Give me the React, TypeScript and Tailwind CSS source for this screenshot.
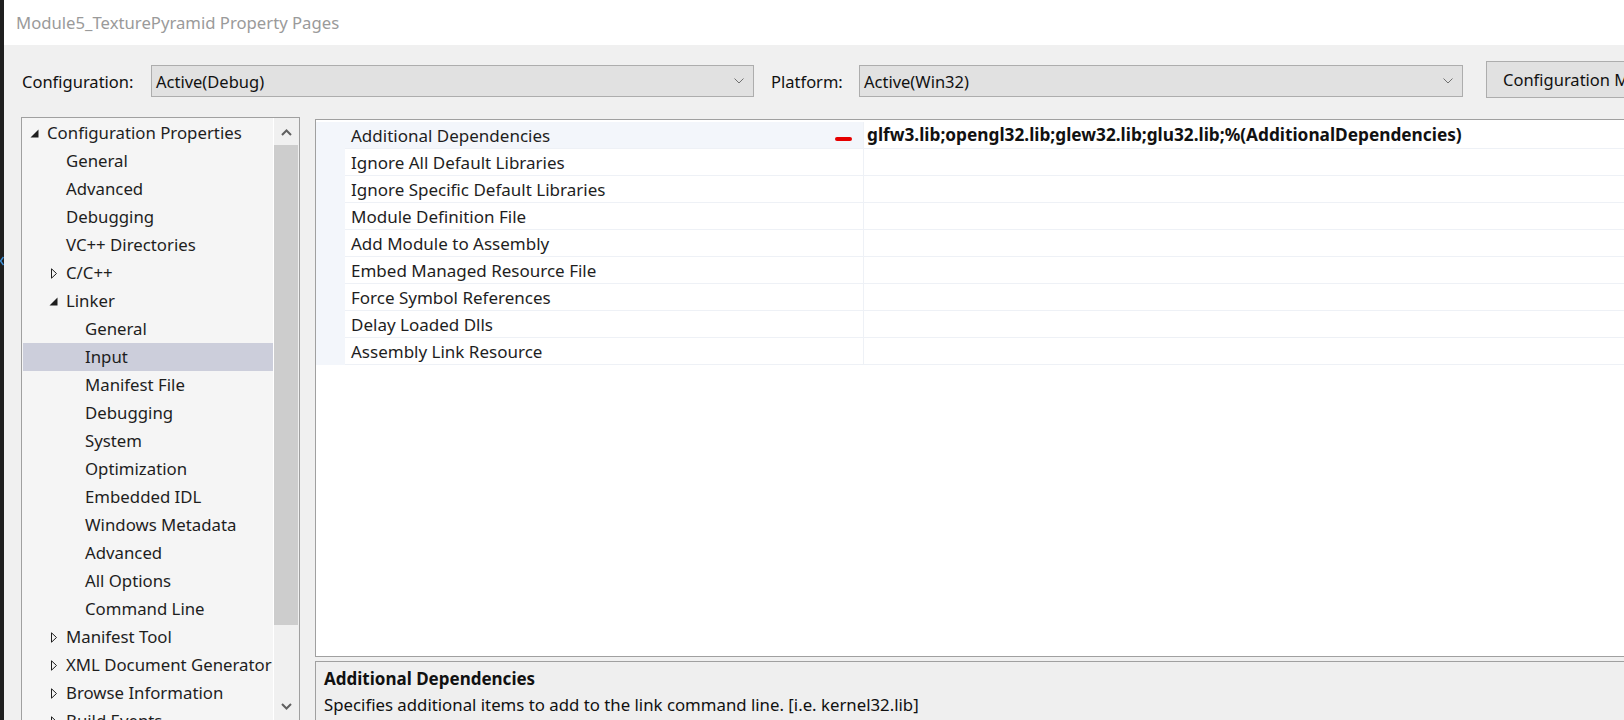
import React from "react";

type TreeItem = { label: string; level: number; icon?: "open" | "closed"; selected?: boolean };

const tree: TreeItem[] = [
  { label: "Configuration Properties", level: 0, icon: "open" },
  { label: "General", level: 1 },
  { label: "Advanced", level: 1 },
  { label: "Debugging", level: 1 },
  { label: "VC++ Directories", level: 1 },
  { label: "C/C++", level: 1, icon: "closed" },
  { label: "Linker", level: 1, icon: "open" },
  { label: "General", level: 2 },
  { label: "Input", level: 2, selected: true },
  { label: "Manifest File", level: 2 },
  { label: "Debugging", level: 2 },
  { label: "System", level: 2 },
  { label: "Optimization", level: 2 },
  { label: "Embedded IDL", level: 2 },
  { label: "Windows Metadata", level: 2 },
  { label: "Advanced", level: 2 },
  { label: "All Options", level: 2 },
  { label: "Command Line", level: 2 },
  { label: "Manifest Tool", level: 1, icon: "closed" },
  { label: "XML Document Generator", level: 1, icon: "closed" },
  { label: "Browse Information", level: 1, icon: "closed" },
  { label: "Build Events", level: 1, icon: "closed" },
];

const props = [
  "Additional Dependencies",
  "Ignore All Default Libraries",
  "Ignore Specific Default Libraries",
  "Module Definition File",
  "Add Module to Assembly",
  "Embed Managed Resource File",
  "Force Symbol References",
  "Delay Loaded Dlls",
  "Assembly Link Resource",
];

function Tri({ kind }: { kind?: "open" | "closed" }) {
  if (kind === "open")
    return (
      <svg width="9" height="9" viewBox="0 0 9 9" className="block">
        <polygon points="8.5,0.5 8.5,8.5 0.5,8.5" fill="#1e1e1e" />
      </svg>
    );
  if (kind === "closed")
    return (
      <svg width="9" height="11" viewBox="0 0 9 11" className="block">
        <polygon points="2.5,0.8 7.5,5.5 2.5,10.2" fill="none" stroke="#1e1e1e" strokeWidth="1" />
      </svg>
    );
  return null;
}

function Chevron() {
  return (
    <svg width="10" height="6" viewBox="0 0 10 6" className="block">
      <path d="M0.5 0.5 L5 5 L9.5 0.5" fill="none" stroke="#707070" strokeWidth="1" />
    </svg>
  );
}

function Dropdown({ value, w }: { value: string; w: string }) {
  return (
    <div className={`flex h-[32px] ${w} shrink-0 items-center justify-between border border-[#adadad] bg-[#e1e1e1] pl-[4px] pr-[9px]`}>
      <span className="pt-[2px] text-[16.5px] leading-none text-[#111]">{value}</span>
      <Chevron />
    </div>
  );
}

export default function App() {
  return (
    <div className="flex h-[720px] w-[1624px] overflow-hidden font-['Noto_Sans',sans-serif] text-[#1e1e1e]">
      <div className="relative w-[4px] shrink-0 bg-[#1f1f1f]">
        <svg width="4" height="10" viewBox="0 0 4 10" className="absolute left-0 top-[256px]">
          <path d="M3.5 1 L0.5 5 L3.5 9" fill="none" stroke="#3d8fd6" strokeWidth="1.5" />
        </svg>
      </div>
      <div className="flex min-w-0 flex-1 flex-col overflow-hidden bg-[#f0f0f0]">
        <div className="flex h-[45px] shrink-0 items-center bg-white pl-[12px] pt-[1px] text-[16.7px] text-[#9a9a9a]">
          Module5_TexturePyramid Property Pages
        </div>

        <div className="flex h-[72px] shrink-0 items-start pl-[18px] pt-[16px]">
          <div className="mt-[4px] flex h-[32px] items-center">
            <span className="w-[129px] shrink-0 pt-[2px] text-[16.5px] leading-none text-[#111]">Configuration:</span>
            <Dropdown value="Active(Debug)" w="w-[603px]" />
            <span className="ml-[17px] w-[88px] shrink-0 pt-[2px] text-[16.5px] leading-none text-[#111]">Platform:</span>
            <Dropdown value="Active(Win32)" w="w-[604px]" />
          </div>
          <div className="ml-[23px] flex h-[37px] w-[200px] shrink-0 items-center border border-[#adadad] bg-[#e1e1e1] pl-[16px] pt-[2px] text-[16.5px] leading-none whitespace-nowrap text-[#111]">
            Configuration Manager...
          </div>
        </div>

        <div className="flex min-h-0 flex-1 items-start pl-[17px]">
          {/* tree */}
          <div className="flex h-[605px] w-[279px] shrink-0 border border-[#a0a0a0] bg-[#f5f5f5]">
            <div className="min-w-0 flex-1 overflow-hidden pt-[1px]">
              {tree.map((t, i) => (
                <div
                  key={i}
                  className={`ml-[1px] flex h-[28px] items-center whitespace-nowrap text-[16.8px] leading-none ${t.selected ? "bg-[#cccedb]" : ""}`}
                  style={{ paddingLeft: 7 + t.level * 19 }}
                >
                  <span className="flex w-[9px] shrink-0 justify-center">
                    <Tri kind={t.icon} />
                  </span>
                  <span className="ml-[8px]">{t.label}</span>
                </div>
              ))}
            </div>
            <div className="flex w-[26px] shrink-0 flex-col border-l border-white bg-[#f0f0f0]">
              <div className="flex h-[27px] shrink-0 items-center justify-center pt-[2px]">
                <svg width="11" height="7" viewBox="0 0 11 7" className="block">
                  <path d="M1 6 L5.5 1.5 L10 6" fill="none" stroke="#606060" strokeWidth="2" />
                </svg>
              </div>
              <div className="mr-[1px] h-[480px] shrink-0 bg-[#cdcdcd]" />
              <div className="flex-1" />
              <div className="flex h-[28px] shrink-0 items-center justify-center pb-[2px]">
                <svg width="11" height="7" viewBox="0 0 11 7" className="block">
                  <path d="M1 1 L5.5 5.5 L10 1" fill="none" stroke="#606060" strokeWidth="2" />
                </svg>
              </div>
            </div>
          </div>

          {/* right side */}
          <div className="ml-[15px] flex w-[1320px] shrink-0 flex-col">
            <div className="mt-[2px] h-[538px] shrink-0 border border-[#a0a0a0] bg-white pt-[2px]">
              {props.map((p, i) => (
                <div key={i} className="flex h-[27px]">
                  <div className="w-[29px] shrink-0 bg-[#f3f6fb]" />
                  <div
                    className={`flex w-[518px] shrink-0 items-center border-b border-[#eef1f6] pl-[6px] text-[17px] leading-none whitespace-nowrap ${i === 0 ? "bg-[#f3f6fb]" : "bg-white"}`}
                  >
                    {p}
                  </div>
                  <div className="relative flex min-w-0 flex-1 items-center border-b border-l border-[#eef1f6] pl-[3px] text-[17.25px] leading-none font-bold whitespace-nowrap text-[#111]">
                    {i === 0 ? "glfw3.lib;opengl32.lib;glew32.lib;glu32.lib;%(AdditionalDependencies)" : ""}
                    {i === 0 ? (
                      <span className="absolute left-[-29px] top-[15px] h-[4px] w-[17px] rounded-[2px] bg-[#e60000]" />
                    ) : null}
                  </div>
                </div>
              ))}
            </div>
            <div className="mt-[4px] h-[80px] shrink-0 border-t border-l border-[#a0a0a0] bg-[#efefef] pl-[8px] pt-[7px]">
              <div className="text-[17px] leading-[20px] font-bold text-[#111]">Additional Dependencies</div>
              <div className="mt-[6px] text-[16.8px] leading-[20px] text-[#111]">
                Specifies additional items to add to the link command line. [i.e. kernel32.lib]
              </div>
            </div>
          </div>
        </div>
      </div>
    </div>
  );
}
